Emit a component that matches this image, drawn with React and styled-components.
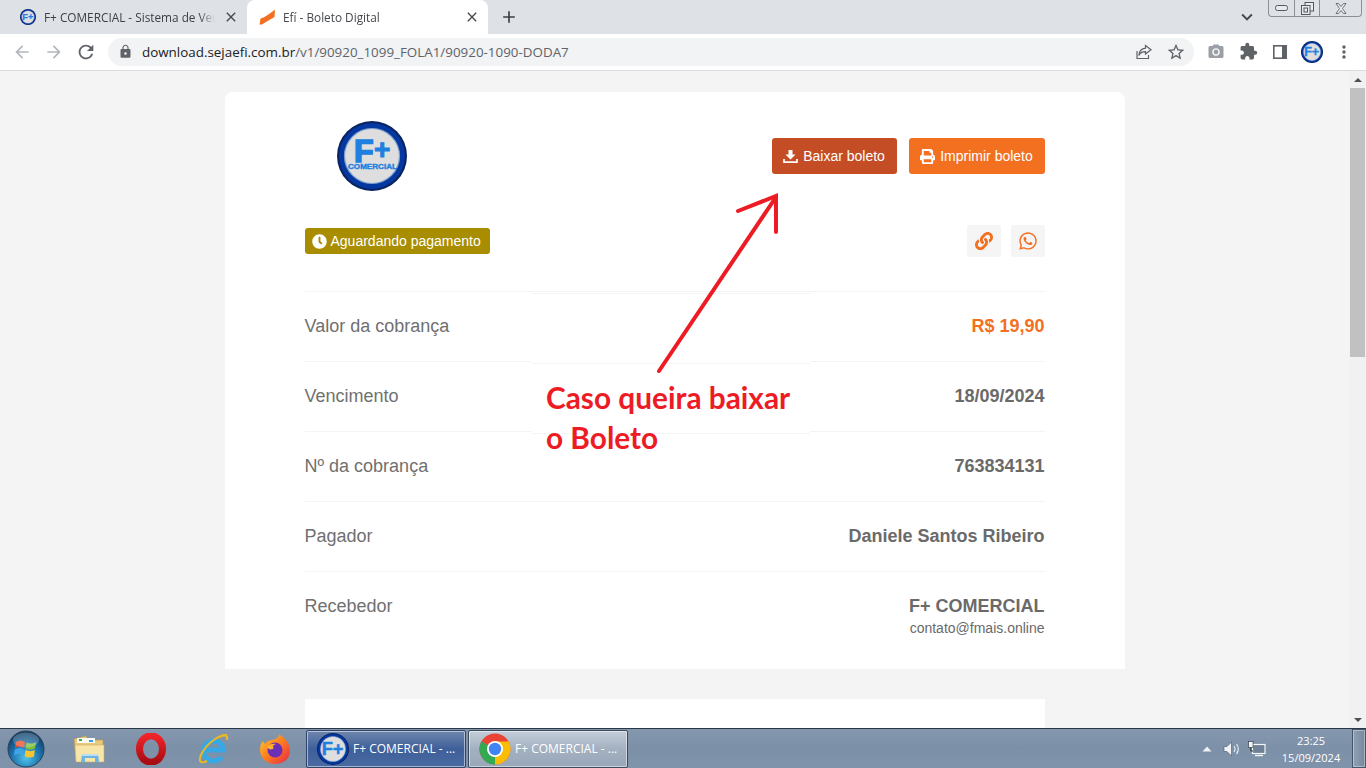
import React from "react";
import styled, { createGlobalStyle } from "styled-components";
import {
  MdAdd,
  MdArrowBack,
  MdArrowForward,
  MdClose,
  MdExpandMore,
  MdExtension,
  MdLock,
  MdMoreVert,
  MdPhotoCamera,
  MdRefresh,
  MdStarBorder,
} from "react-icons/md";
import { FaClock, FaLink, FaPrint, FaWhatsapp } from "react-icons/fa";

const GlobalStyle = createGlobalStyle`
  html, body {
    margin: 0;
    padding: 0;
    overflow: hidden;
  }
  body {
    font-family: "Liberation Sans", Arial, sans-serif;
  }
  * {
    box-sizing: border-box;
  }
`;

const Screen = styled.div`
  position: relative;
  width: 1366px;
  height: 768px;
  display: flex;
  flex-direction: column;
  overflow: hidden;
  background: #f4f4f4;
`;

/* browser chrome */
const TabStrip = styled.div`
  height: 34px;
  flex: none;
  display: flex;
  align-items: stretch;
  background: #dee1e6;
  padding-left: 8px;
  font-family: "Open Sans", sans-serif;
  font-size: 11.8px;
  color: #3c4043;
`;

const Tab = styled.div`
  width: ${(p) => (p.$active ? "241px" : "239px")};
  display: flex;
  align-items: center;
  padding: 0 8px 0 12px;
  border-radius: 8px 8px 0 0;
  background: ${(p) => (p.$active ? "#fff" : "transparent")};
  color: ${(p) => (p.$active ? "#45484c" : "#3c4043")};
  svg.close {
    flex: none;
    width: 16px;
    height: 16px;
    color: #45484c;
  }
`;

const TabTitle = styled.span`
  flex: 1;
  min-width: 0;
  margin-left: 8px;
  white-space: nowrap;
  mask-image: linear-gradient(to left, transparent 8px, #000 24px);
`;

const NewTab = styled.div`
  width: 40px;
  display: flex;
  align-items: center;
  justify-content: center;
  margin-left: 1px;
  color: #3c4043;
  font-size: 20px;
`;

const StripEnd = styled.div`
  margin-left: auto;
  display: flex;
  align-items: flex-start;
  color: #45484c;
`;

const Chevron = styled.div`
  margin: 6px 10px 0 0;
  font-size: 22px;
  line-height: 0;
`;

const WindowButtons = styled.div`
  display: flex;
  height: 17px;
  margin-right: 4px;
  border: 1px solid #8b8f96;
  border-top: 0;
  border-radius: 0 0 4px 4px;
`;

const WindowButton = styled.div`
  width: ${(p) => p.$w}px;
  display: flex;
  align-items: center;
  justify-content: center;
  border-left: ${(p) => (p.$first ? "0" : "1px solid #8b8f96")};
`;

const Toolbar = styled.div`
  height: 37px;
  flex: none;
  display: flex;
  align-items: center;
  background: #fff;
  border-bottom: 1px solid #dadce0;
  padding: 0 0 1px 6px;
`;

const NavButton = styled.div`
  width: 32px;
  height: 32px;
  display: flex;
  align-items: center;
  justify-content: center;
  font-size: ${(p) => p.$size || 20}px;
  color: ${(p) => p.$color || "#5f6368"};
  flex: none;
`;

const Omnibox = styled.div`
  width: 1086px;
  height: 28px;
  margin: 0 6px 0 6px;
  display: flex;
  align-items: center;
  border-radius: 14px;
  background: #f1f3f4;
  padding: 0 2px 0 10px;
  font-family: "Open Sans", sans-serif;
  font-size: 13.4px;
  color: #5f6368;
  flex: none;
`;

const Url = styled.div`
  margin-left: 9px;
  flex: 1;
  white-space: nowrap;
  b {
    font-weight: 400;
    color: #202124;
  }
`;

const LockIcon = styled(MdLock)`
  font-size: 15px;
  color: #5f6368;
`;

/* page content */
const Viewport = styled.div`
  flex: 1;
  min-height: 0;
  display: flex;
`;

const Page = styled.div`
  flex: 1;
  min-width: 0;
  overflow: hidden;
`;

const Card = styled.div`
  width: 900px;
  margin: 21px auto 0;
  background: #fff;
  border-radius: 8px 8px 0 0;
  color: #666;
`;

const CardBody = styled.div`
  padding: 29px 80px 0;
`;

const HeaderRow = styled.div`
  display: flex;
  align-items: center;
  justify-content: space-between;
`;

const LogoWrap = styled.div`
  margin-left: 32px;
  width: 70px;
  height: 70px;
`;

const Actions = styled.div`
  display: flex;
  gap: 12px;
`;

const ActionButton = styled.button`
  height: 36px;
  width: ${(p) => p.$w}px;
  border: 0;
  padding: 0;
  border-radius: 3px;
  background: ${(p) => p.$bg};
  color: #fff;
  display: flex;
  align-items: center;
  justify-content: center;
  gap: 5px;
  font-family: "Liberation Sans", Arial, sans-serif;
  font-size: 14px;
`;

const StatusRow = styled.div`
  margin-top: 34px;
  display: flex;
  align-items: center;
  justify-content: space-between;
`;

const Badge = styled.div`
  height: 26px;
  width: 185px;
  display: flex;
  align-items: center;
  gap: 4px;
  padding-left: 7px;
  border-radius: 3px;
  background: #a88d00;
  color: #fff;
  font-size: 14px;
  white-space: nowrap;
`;

const ShareGroup = styled.div`
  display: flex;
  gap: 10px;
`;

const ShareButton = styled.div`
  width: 34px;
  height: 32px;
  display: flex;
  align-items: center;
  justify-content: center;
  background: #f5f5f5;
  border-radius: 3px;
  color: #f37021;
  font-size: 18px;
`;

const Rows = styled.div`
  margin-top: 34px;
`;

const Row = styled.div`
  height: ${(p) => (p.$tall ? "98px" : "70px")};
  display: flex;
  justify-content: space-between;
  align-items: flex-start;
  border-top: 1px solid #f4f4f4;
  padding-top: 23px;
  font-size: 18px;
  line-height: 22px;
`;

const Label = styled.div`
  color: #707070;
`;

const Value = styled.div`
  font-weight: 700;
  text-align: right;
  color: ${(p) => (p.$accent ? "#f37021" : "#6a6a6a")};
`;

const SubValue = styled.div`
  margin-top: 2px;
  font-weight: 400;
  font-size: 14px;
  line-height: 19px;
`;

const CardFooter = styled.div`
  background: #f4f4f4;
  padding: 30px 80px 0;
`;

const Paper = styled.div`
  height: 300px;
  background: #fff;
`;

/* scrollbar */
const Scrollbar = styled.div`
  width: 17px;
  flex: none;
  display: flex;
  flex-direction: column;
  align-items: center;
  background: #f1f1f1;
`;

const ScrollArrow = styled.div`
  height: 17px;
  flex: none;
  display: flex;
  align-items: center;
  justify-content: center;
  &::before {
    content: "";
    border-left: 4px solid transparent;
    border-right: 4px solid transparent;
    ${(p) => (p.$down ? "border-top: 4px solid #505050;" : "border-bottom: 4px solid #505050;")}
  }
`;

const ScrollThumb = styled.div`
  width: 15px;
  height: 269px;
  background: #c1c1c1;
`;

const ScrollGap = styled.div`
  flex: 1;
`;

/* the note someone pasted over the screenshot */
const Note = styled.div`
  position: absolute;
  left: 532px;
  top: 292px;
  width: 278px;
  height: 142px;
  background: #fff;
`;

const NoteLine = styled.div`
  position: absolute;
  left: 0;
  right: 0;
  top: ${(p) => p.$top}px;
  height: 1px;
  background: #f4f4f4;
`;

const NoteText = styled.div`
  position: absolute;
  left: 14px;
  top: 86px;
  white-space: nowrap;
  font-family: Lato, sans-serif;
  font-weight: 700;
  font-size: 29.8px;
  line-height: 40px;
  color: #ed1c24;
`;

const ArrowLayer = styled.svg`
  position: absolute;
  left: 640px;
  top: 180px;
  width: 160px;
  height: 200px;
`;

/* windows taskbar */
const Taskbar = styled.div`
  height: 40px;
  flex: none;
  display: flex;
  align-items: center;
  border-top: 1px solid #2b3646;
  background: linear-gradient(#8497ad, #7c90a8 50%, #7f93ab);
  font-family: "Open Sans", sans-serif;
  color: #fff;
`;

const Pinned = styled.div`
  width: 62px;
  flex: none;
  display: flex;
  justify-content: center;
  align-items: center;
`;

const StartOrb = styled.div`
  width: 52px;
  flex: none;
  display: flex;
  justify-content: center;
  margin-right: 6px;
`;

const TaskButton = styled.div`
  width: ${(p) => p.$w}px;
  height: 38px;
  flex: none;
  margin-left: ${(p) => p.$ml}px;
  display: flex;
  align-items: center;
  gap: 4px;
  padding-left: 10px;
  font-size: 12px;
  white-space: nowrap;
  border: 1px solid ${(p) => (p.$active ? "#31456b" : "#3c4a5c")};
  box-shadow: inset 0 0 0 1px rgba(255, 255, 255, 0.5);
  border-radius: 2px;
  background: ${(p) =>
    p.$active
      ? "linear-gradient(#6f87ad, #3f5f9a 50%, #4a6aa3)"
      : "linear-gradient(#c4ced9, #a3b0c0 50%, #98a7b9)"};
`;

const Tray = styled.div`
  margin-left: auto;
  display: flex;
  align-items: center;
  height: 100%;
`;

const TrayIcon = styled.div`
  width: ${(p) => p.$w}px;
  display: flex;
  justify-content: center;
  align-items: center;
  flex: none;
`;

const Clock = styled.div`
  width: 74px;
  margin-left: 5px;
  text-align: center;
  font-size: 11px;
  line-height: 17px;
`;

const ShowDesktop = styled.div`
  width: 14px;
  height: 100%;
  margin-left: 4px;
  border: 1px solid #45566b;
  box-shadow: inset 0 0 0 1px rgba(255, 255, 255, 0.35);
  background: linear-gradient(90deg, #8fa0b4, #76899f);
`;

const LogoFont = "Liberation Sans, Arial, sans-serif";

const FPlusLogo = ({ size, small }) => (
  <svg width={size} height={size} viewBox="0 0 70 70">
    <circle cx="35" cy="35" r="35" fill="#0a2260" />
    <circle cx="35" cy="35" r="33" fill="#0438a0" />
    <circle cx="35" cy="35" r="27.5" fill="#dedede" stroke="#7da0cf" strokeWidth="1.2" />
    {small ? (
      <text x="34" y="49" textAnchor="middle" fontFamily={LogoFont} fontWeight="700" fontSize="40" fill="#2080e0" stroke="#2080e0">
        F+
      </text>
    ) : (
      <>
        <text x="17" y="41" fontFamily={LogoFont} fontWeight="700" fontSize="32" fill="#2080e0" stroke="#2080e0" strokeWidth="1.6">
          F
        </text>
        <text x="37" y="38" fontFamily={LogoFont} fontWeight="700" fontSize="28" fill="#2080e0" stroke="#2080e0" strokeWidth="1">
          +
        </text>
        <text x="11" y="48" textLength="49" lengthAdjust="spacingAndGlyphs" fontFamily={LogoFont} fontWeight="700" fontSize="8" fill="#2080e0" stroke="#2080e0" strokeWidth="0.4">
          COMERCIAL
        </text>
      </>
    )}
  </svg>
);

const EfiIcon = () => (
  <svg width="16" height="16" viewBox="0 0 16 16">
    <path d="M0.5 15.5 L1.5 9.5 C4 9 9 6 16 0.5 L15.5 8 C12 10.5 7 12.5 3 15.5 Z" fill="#f37021" />
  </svg>
);

const DownloadIcon = () => (
  <svg width="15" height="15" viewBox="0 0 15 15">
    <path d="M5.5 1 H9.5 V5.5 H12.5 L7.5 10.5 L2.5 5.5 H5.5 Z" fill="#fff" />
    <path d="M1 10 V13.2 H14 V10" fill="none" stroke="#fff" strokeWidth="1.7" strokeLinejoin="round" />
  </svg>
);

const ShareIcon = () => (
  <svg width="16" height="16" viewBox="0 0 16 16" fill="none" stroke="#5f6368" strokeWidth="1.2">
    <path d="M1 7 V14.5 H12.5 V11" />
    <path d="M9.5 1.5 L15 5.8 L9.5 10 V7.6 C6 7.5 4 9 2.8 11.5 C3.2 7.5 5.5 4.6 9.5 4.2 Z" />
  </svg>
);

const SidePanelIcon = () => (
  <svg width="14" height="14" viewBox="0 0 14 14">
    <rect x="0.8" y="0.8" width="12.4" height="12.4" fill="#fff" stroke="#5f6368" strokeWidth="1.6" />
    <rect x="9" y="1" width="4" height="12" fill="#5f6368" />
  </svg>
);

const WindowsOrb = () => (
  <svg width="38" height="38" viewBox="0 0 38 38">
    <defs>
      <radialGradient id="orb" cx="50%" cy="75%" r="70%">
        <stop offset="0" stopColor="#4fc3ee" />
        <stop offset="0.6" stopColor="#1a6ea8" />
        <stop offset="1" stopColor="#123d63" />
      </radialGradient>
    </defs>
    <circle cx="19" cy="19" r="18" fill="url(#orb)" stroke="#2a3f55" />
    <path d="M9 12 C12 10 15 10 18 12 L17 18 C14 16 11 16 8 18 Z" fill="#e8502d" />
    <path d="M19.5 12.5 C22 14 26 14 29 12 L28 18.5 C25 20 22 20 18.7 18.5 Z" fill="#7fbf3f" />
    <path d="M7.8 19.5 C11 17.5 14 17.5 16.8 19.5 L16 25.5 C13 23.5 10 23.5 7 25.5 Z" fill="#3ea6e6" />
    <path d="M18.5 20 C22 21.5 25 21.5 27.8 20 L27 26.5 C24 28 21 28 17.6 26 Z" fill="#f7c52f" />
    <ellipse cx="19" cy="10" rx="13" ry="7.5" fill="#fff" opacity="0.22" />
  </svg>
);

const FolderIcon = () => (
  <svg width="32" height="32" viewBox="0 0 32 32">
    <path d="M1 6 L13 3 L15 7 H30 V28 H3 Z" fill="#e8c97a" stroke="#b5965a" strokeWidth="0.6" />
    <rect x="4" y="5" width="18" height="5" fill="#fbfbf5" />
    <rect x="6" y="6" width="3" height="2" fill="#3fae3f" />
    <rect x="16" y="7" width="4" height="2" fill="#3aa0e0" />
    <path d="M2 12 H31 V29 H3 Z" fill="#f8e6a8" stroke="#c9ab6c" strokeWidth="0.6" />
    <path d="M9 21 H25 L26 29 H22 V25 H12 V29 H8 Z" fill="#6bb5e6" />
    <path d="M9 21 H25 V23 H9 Z" fill="#b9def5" />
  </svg>
);

const OperaIcon = () => (
  <svg width="30" height="32" viewBox="0 0 30 32">
    <defs>
      <linearGradient id="op" x1="0" y1="0" x2="0" y2="1">
        <stop offset="0" stopColor="#f0242a" />
        <stop offset="1" stopColor="#a90c13" />
      </linearGradient>
    </defs>
    <ellipse cx="15" cy="16" rx="11.5" ry="13.2" fill="none" stroke="url(#op)" strokeWidth="7" />
  </svg>
);

const IEIcon = () => (
  <svg width="32" height="32" viewBox="0 0 32 32">
    <path d="M9 17 H26.5 A10 10 0 1 0 24.5 24" fill="none" stroke="#36a8e6" strokeWidth="5" />
    <path d="M30 2 C24 1 10 9 4 22 C1 29 4 31 10 28" fill="none" stroke="#e8b923" strokeWidth="2" />
    <path d="M23 4 C27 1 31 2 30 7" fill="none" stroke="#e8b923" strokeWidth="2" />
  </svg>
);

const FirefoxIcon = () => (
  <svg width="32" height="32" viewBox="0 0 32 32">
    <defs>
      <linearGradient id="ff" x1="0" y1="0" x2="1" y2="1">
        <stop offset="0" stopColor="#ffcb2e" />
        <stop offset="0.5" stopColor="#ff7a1f" />
        <stop offset="1" stopColor="#e5264a" />
      </linearGradient>
    </defs>
    <path d="M20 1 C27 6 31 11 31 18 C31 26 24 31 16 31 C8 31 1 25 1 17 C1 13 2 10 4 8 L6 11 C8 8 11 7 13 7 C17 6 20 5 20 1 Z" fill="url(#ff)" />
    <circle cx="16" cy="17" r="7.5" fill="#6a2fb5" />
    <path d="M8 14 C10 11 14 10 17 11 C14 12 13 14 15 15 C13 17 10 17 8 14 Z" fill="#ffb02e" />
  </svg>
);

const ChromeIcon = () => (
  <svg width="32" height="32" viewBox="0 0 32 32">
    <circle cx="16" cy="16" r="15.5" fill="#ea4335" />
    <path d="M16 16 L2.6 8.2 A15.5 15.5 0 0 0 16 31.5 L23.7 18 Z" fill="#34a853" />
    <path d="M16 16 L29.4 8.2 A15.5 15.5 0 0 1 16 31.5 Z" fill="#fbbc04" />
    <path d="M16 8.5 H29.4 L23 19 Z" fill="#fbbc04" />
    <circle cx="16" cy="16" r="8" fill="#fff" />
    <circle cx="16" cy="16" r="6.2" fill="#3f83f4" />
  </svg>
);

const SpeakerIcon = () => (
  <svg width="18" height="16" viewBox="0 0 18 16" fill="none">
    <path d="M1 5.5 H4 L8.5 1 V15 L4 10.5 H1 Z" fill="#eef1f5" stroke="#4a5868" strokeWidth="0.6" />
    <path d="M11 5 C12.3 6.8 12.3 9.2 11 11" stroke="#eef1f5" strokeWidth="1.1" />
    <path d="M13.5 3 C15.7 6 15.7 10 13.5 13" stroke="#eef1f5" strokeWidth="1.1" />
  </svg>
);

const NetworkIcon = () => (
  <svg width="18" height="16" viewBox="0 0 18 16">
    <rect x="4.5" y="3.5" width="12.5" height="9" fill="#6f8196" stroke="#f4f6f8" strokeWidth="1.2" />
    <path d="M7 14.5 H15" stroke="#f4f6f8" strokeWidth="1.4" />
    <rect x="0.5" y="0.5" width="4.5" height="6" fill="#f4f6f8" stroke="#26303c" strokeWidth="0.6" />
    <path d="M2.8 6.5 V10 H5" stroke="#26303c" fill="none" />
  </svg>
);

const TrayArrow = () => (
  <svg width="10" height="6" viewBox="0 0 10 6">
    <path d="M5 0.5 L9.5 5.5 H0.5 Z" fill="#eef1f5" />
  </svg>
);

const rows = [
  { label: "Valor da cobrança", value: "R$ 19,90", accent: true },
  { label: "Vencimento", value: "18/09/2024" },
  { label: "Nº da cobrança", value: "763834131" },
  { label: "Pagador", value: "Daniele Santos Ribeiro" },
];

const App = () => {
  return (
    <Screen>
      <GlobalStyle />
      <TabStrip>
        <Tab>
          <FPlusLogo size={16} small />
          <TabTitle>F+ COMERCIAL - Sistema de Ven</TabTitle>
          <MdClose className="close" />
        </Tab>
        <Tab $active>
          <EfiIcon />
          <TabTitle>Efí - Boleto Digital</TabTitle>
          <MdClose className="close" />
        </Tab>
        <NewTab>
          <MdAdd />
        </NewTab>
        <StripEnd>
          <Chevron>
            <MdExpandMore />
          </Chevron>
          <WindowButtons>
            <WindowButton $w={25} $first>
              <svg width="13" height="6" viewBox="0 0 13 6">
                <rect x="0.5" y="0.5" width="12" height="5" rx="2" fill="#e8eaed" stroke="#55585d" />
              </svg>
            </WindowButton>
            <WindowButton $w={25}>
              <svg width="13" height="13" viewBox="0 0 13 13" fill="#e8eaed" stroke="#55585d">
                <rect x="4" y="0.5" width="8.5" height="8.5" />
                <rect x="0.5" y="3.5" width="8.5" height="9" />
                <rect x="3" y="6" width="3.5" height="4" />
              </svg>
            </WindowButton>
            <WindowButton $w={42}>
              <svg width="12" height="11" viewBox="0 0 12 11">
                <path d="M1 0.5 H3.5 L6 3.5 L8.5 0.5 H11 L7.5 5.5 L11 10.5 H8.5 L6 7.5 L3.5 10.5 H1 L4.5 5.5 Z" fill="#e8eaed" stroke="#55585d" strokeWidth="0.8" />
              </svg>
            </WindowButton>
          </WindowButtons>
        </StripEnd>
      </TabStrip>

      <Toolbar>
        <NavButton $color="#b4b7bb">
          <MdArrowBack />
        </NavButton>
        <NavButton $color="#b4b7bb">
          <MdArrowForward />
        </NavButton>
        <NavButton $size={22}>
          <MdRefresh />
        </NavButton>
        <Omnibox>
          <LockIcon />
          <Url>
            <b>download.sejaefi.com.br</b>/v1/90920_1099_FOLA1/90920-1090-DODA7
          </Url>
          <NavButton>
            <ShareIcon />
          </NavButton>
          <NavButton $size={20}>
            <MdStarBorder />
          </NavButton>
        </Omnibox>
        <NavButton $size={18} $color="#9aa0a6">
          <MdPhotoCamera />
        </NavButton>
        <NavButton $size={19}>
          <MdExtension />
        </NavButton>
        <NavButton>
          <SidePanelIcon />
        </NavButton>
        <NavButton>
          <FPlusLogo size={22} small />
        </NavButton>
        <NavButton $size={20}>
          <MdMoreVert />
        </NavButton>
      </Toolbar>

      <Viewport>
        <Page>
          <Card>
            <CardBody>
              <HeaderRow>
                <LogoWrap>
                  <FPlusLogo size={70} />
                </LogoWrap>
                <Actions>
                  <ActionButton $w={125} $bg="#c44d25">
                    <DownloadIcon />
                    Baixar boleto
                  </ActionButton>
                  <ActionButton $w={136} $bg="#f37021">
                    <FaPrint size={15} />
                    Imprimir boleto
                  </ActionButton>
                </Actions>
              </HeaderRow>
              <StatusRow>
                <Badge>
                  <FaClock size={15} />
                  Aguardando pagamento
                </Badge>
                <ShareGroup>
                  <ShareButton>
                    <FaLink />
                  </ShareButton>
                  <ShareButton>
                    <FaWhatsapp size={20} />
                  </ShareButton>
                </ShareGroup>
              </StatusRow>
              <Rows>
                {rows.map((r) => (
                  <Row key={r.label}>
                    <Label>{r.label}</Label>
                    <Value $accent={r.accent}>{r.value}</Value>
                  </Row>
                ))}
                <Row $tall>
                  <Label>Recebedor</Label>
                  <Value>
                    F+ COMERCIAL
                    <SubValue>contato@fmais.online</SubValue>
                  </Value>
                </Row>
              </Rows>
            </CardBody>
            <CardFooter>
              <Paper />
            </CardFooter>
          </Card>
        </Page>
        <Scrollbar>
          <ScrollArrow />
          <ScrollThumb />
          <ScrollGap />
          <ScrollArrow $down />
        </Scrollbar>
      </Viewport>

      <Taskbar>
        <StartOrb>
          <WindowsOrb />
        </StartOrb>
        <Pinned>
          <FolderIcon />
        </Pinned>
        <Pinned>
          <OperaIcon />
        </Pinned>
        <Pinned>
          <IEIcon />
        </Pinned>
        <Pinned>
          <FirefoxIcon />
        </Pinned>
        <TaskButton $active $w={160} $ml={0}>
          <FPlusLogo size={32} small />
          F+ COMERCIAL - ...
        </TaskButton>
        <TaskButton $w={160} $ml={2}>
          <ChromeIcon />
          F+ COMERCIAL - ...
        </TaskButton>
        <Tray>
          <TrayIcon $w={24}>
            <TrayArrow />
          </TrayIcon>
          <TrayIcon $w={26}>
            <SpeakerIcon />
          </TrayIcon>
          <TrayIcon $w={24}>
            <NetworkIcon />
          </TrayIcon>
          <Clock>
            <div>23:25</div>
            <div>15/09/2024</div>
          </Clock>
          <ShowDesktop />
        </Tray>
      </Taskbar>

      <Note>
        <NoteLine $top={1} />
        <NoteLine $top={71} />
        <NoteLine $top={141} />
        <NoteText>
          Caso queira baixar
          <br />o Boleto
        </NoteText>
      </Note>
      <ArrowLayer viewBox="640 180 160 200" fill="none" stroke="#ed1c24" strokeWidth="4" strokeLinecap="round">
        <path d="M659 371 L776 197" />
        <path d="M738 211 L776 196 L776 232" />
      </ArrowLayer>
    </Screen>
  );
};

export default App;
